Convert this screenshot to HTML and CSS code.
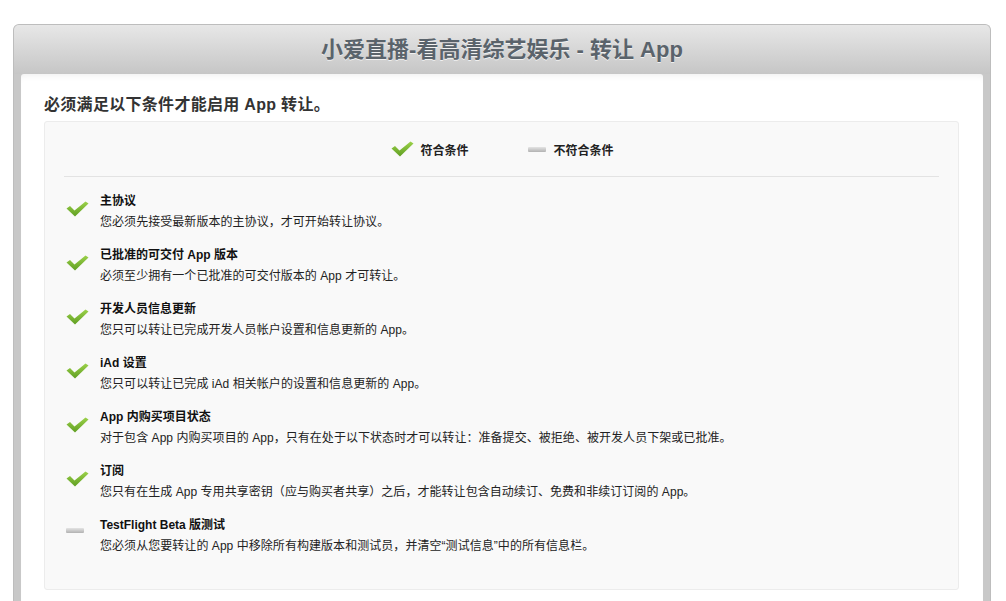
FILE: index.html
```html
<!DOCTYPE html>
<html lang="zh-CN">
<head>
<meta charset="utf-8">
<title>转让 App</title>
<link rel="stylesheet" href="styles.css">
</head>
<body>
<svg width="0" height="0" class="defs">
  <defs>
    <linearGradient id="g" x1="0" y1="0" x2="0" y2="1">
      <stop offset="0" stop-color="#9cd24a"/>
      <stop offset="1" stop-color="#5f9e22"/>
    </linearGradient>
    <symbol id="check" viewBox="0 0 23 16">
      <path d="M0.5 7.5 L4 5 L8.5 9.5 L19.5 0.5 L22.5 2.5 L9 15.5 Z" fill="url(#g)"/>
    </symbol>
  </defs>
</svg>
<div class="frame">
  <div class="frame-head">小爱直播-看高清综艺娱乐 - 转让 App</div>
  <div class="frame-body">
    <h2 class="lead">必须满足以下条件才能启用 App 转让。</h2>
    <div class="panel">
      <div class="legend">
        <div class="legend-item"><svg class="ico-check"><use href="#check"/></svg><span>符合条件</span></div>
        <div class="legend-item"><span class="ico-dash"></span><span>不符合条件</span></div>
      </div>
      <ul class="reqs">
        <li class="req">
          <div class="req-icon"><svg class="ico-check"><use href="#check"/></svg></div>
          <div class="req-text"><div class="req-title">主协议</div><div class="req-desc">您必须先接受最新版本的主协议，才可开始转让协议。</div></div>
        </li>
        <li class="req">
          <div class="req-icon"><svg class="ico-check"><use href="#check"/></svg></div>
          <div class="req-text"><div class="req-title">已批准的可交付 App 版本</div><div class="req-desc">必须至少拥有一个已批准的可交付版本的 App 才可转让。</div></div>
        </li>
        <li class="req">
          <div class="req-icon"><svg class="ico-check"><use href="#check"/></svg></div>
          <div class="req-text"><div class="req-title">开发人员信息更新</div><div class="req-desc">您只可以转让已完成开发人员帐户设置和信息更新的 App。</div></div>
        </li>
        <li class="req">
          <div class="req-icon"><svg class="ico-check"><use href="#check"/></svg></div>
          <div class="req-text"><div class="req-title">iAd 设置</div><div class="req-desc">您只可以转让已完成 iAd 相关帐户的设置和信息更新的 App。</div></div>
        </li>
        <li class="req">
          <div class="req-icon"><svg class="ico-check"><use href="#check"/></svg></div>
          <div class="req-text"><div class="req-title">App 内购买项目状态</div><div class="req-desc">对于包含 App 内购买项目的 App，只有在处于以下状态时才可以转让：准备提交、被拒绝、被开发人员下架或已批准。</div></div>
        </li>
        <li class="req">
          <div class="req-icon"><svg class="ico-check"><use href="#check"/></svg></div>
          <div class="req-text"><div class="req-title">订阅</div><div class="req-desc">您只有在生成 App 专用共享密钥（应与购买者共享）之后，才能转让包含自动续订、免费和非续订订阅的 App。</div></div>
        </li>
        <li class="req">
          <div class="req-icon"><span class="ico-dash"></span></div>
          <div class="req-text"><div class="req-title">TestFlight Beta 版测试</div><div class="req-desc">您必须从您要转让的 App 中移除所有构建版本和测试员，并清空“测试信息”中的所有信息栏。</div></div>
        </li>
      </ul>
    </div>
  </div>
</div>
</body>
</html>
```

FILE: styles.css
```css
* { box-sizing: border-box; }
html, body { margin: 0; padding: 0; background: #fff; }
body {
  font-family: "Liberation Sans", "Noto Sans CJK SC", sans-serif;
  color: #222;
  overflow: hidden;
  height: 601px;
}
.defs { position: absolute; width: 0; height: 0; }

.frame {
  margin: 24px 0 0 13px;
  width: 978px;
  height: 577px;
  border-radius: 6px 6px 0 0;
  background: #c8c8c8;
  border: 1px solid #bdbdbd;
  border-bottom: none;
  padding: 0 7px;
}
.frame-head {
  margin: 0 -7px;
  height: 49px;
  border-radius: 5px 5px 0 0;
  background: linear-gradient(#e7e7e7, #c6c6c6);
  text-align: center;
  font-size: 22px;
  font-weight: bold;
  line-height: 50px;
  color: #5a636b;
  text-shadow: 0 1px 0 rgba(255,255,255,0.7);
}
.frame-body {
  background: #fff;
  border-radius: 3px 3px 0 0;
  height: 528px;
  padding: 20px 24px 0 23px;
  box-shadow: inset 0 6px 6px -4px rgba(0,0,0,0.06);
}
.lead {
  margin: 0 0 6px;
  font-size: 16px;
  line-height: 21px;
  font-weight: bold;
  color: #333;
  letter-spacing: 0.3px;
}
.panel {
  background: #f9f9f9;
  border: 1px solid #ececec;
  border-radius: 3px;
  padding: 0 19px 20px;
  height: 469px;
}
.legend {
  height: 55px;
  border-bottom: 1px solid #e3e3e3;
  display: flex;
  justify-content: center;
  align-items: center;
  gap: 59px;
  padding-left: 2px;
}
.legend-item {
  display: flex;
  align-items: center;
  font-size: 12px;
  font-weight: bold;
  color: #222;
}
.legend-item .ico-check { margin-right: 6px; }
.legend-item .ico-dash { margin-right: 8px; }

.ico-check { width: 23px; height: 16px; display: block; }
.ico-dash {
  display: block;
  width: 18px;
  height: 5px;
  background: linear-gradient(#e4e4e4, #b2b2b2);
  border-radius: 1px;
}

.reqs { list-style: none; margin: 0; padding: 15px 0 0; }
.req { display: flex; margin-bottom: 15px; }
.req-icon { width: 36px; flex: none; padding: 9px 0 0 2px; }
.req-icon .ico-dash { margin-top: 3px; }
.req-title {
  font-size: 12px;
  font-weight: bold;
  line-height: 18px;
  color: #111;
}
.req-desc {
  margin-top: 3px;
  font-size: 12px;
  line-height: 18px;
  color: #222;
  letter-spacing: 0.05px;
}
```
